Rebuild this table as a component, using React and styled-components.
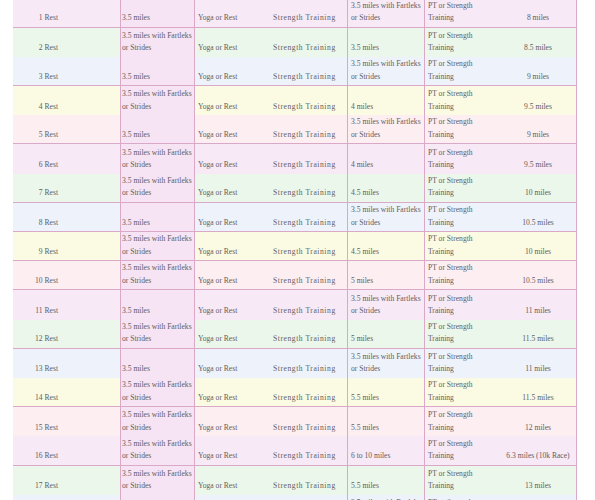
import React from "react";
import styled, { createGlobalStyle } from "styled-components";

const GlobalStyle = createGlobalStyle`
  html, body {
    margin: 0;
    padding: 0;
    background: #ffffff;
    overflow: hidden;
  }
`;

const Page = styled.div`
  width: 595px;
  height: 500px;
  overflow: hidden;
  padding-left: 13px;
  box-sizing: border-box;
  font-family: "Liberation Serif", "Times New Roman", serif;
  color: #615e61;
`;

const Table = styled.div`
  margin-top: -1.5px;
  width: 564px;
`;

const rowColors = ["#f8e9f6", "#ecf7eb", "#eef3fb", "#fbfbe3", "#fdeef2"];

const Row = styled.div`
  display: grid;
  grid-template-columns: 107px 75px 77px 75px 77px 76px 77px;
  height: 29.2px;
  box-sizing: border-box;
  background: ${(p) => p.$bg};
  border-bottom: ${(p) => (p.$line ? "1px solid #d9a9c7" : "none")};
`;

const Cell = styled.div`
  display: flex;
  flex-direction: column;
  justify-content: flex-end;
  align-items: flex-start;
  box-sizing: border-box;
  padding: 0 0 2px ${(p) => p.$pl || 0}px;
  font-size: 7.6px;
  line-height: 12.5px;
  white-space: nowrap;
  letter-spacing: ${(p) => p.$ls || 0}px;
`;

const WeekCell = styled(Cell)`
  align-items: flex-end;
  padding-right: 62px;
`;

const EasyCell = styled(Cell)`
  background: #f6e3f3;
  border-left: 1px solid #d9a9c7;
  border-right: 1px solid #d9a9c7;
  padding-left: 1px;
`;

const RunCell = styled(Cell)`
  border-left: 1px solid #d9a9c7;
  padding-left: 3px;
`;

const CrossCell = styled(Cell)`
  border-left: 1px solid #d9a9c7;
  padding-left: 3px;
`;

const LongCell = styled(Cell)`
  align-items: center;
  border-right: 1px solid #d9a9c7;
`;

const FART = ["3.5 miles with Fartleks", "or Strides"];

const weeks = [
  { easy: "3.5 miles", run: FART, long: "8 miles", line: true },
  { easy: FART, run: "3.5 miles", long: "8.5 miles" },
  { easy: "3.5 miles", run: FART, long: "9 miles", line: true },
  { easy: FART, run: "4 miles", long: "9.5 miles" },
  { easy: "3.5 miles", run: FART, long: "9 miles", line: true },
  { easy: FART, run: "4 miles", long: "9.5 miles" },
  { easy: FART, run: "4.5 miles", long: "10 miles", line: true },
  { easy: "3.5 miles", run: FART, long: "10.5 miles", line: true },
  { easy: FART, run: "4.5 miles", long: "10 miles", line: true },
  { easy: FART, run: "5 miles", long: "10.5 miles", line: true },
  { easy: "3.5 miles", run: FART, long: "11 miles" },
  { easy: FART, run: "5 miles", long: "11.5 miles", line: true },
  { easy: "3.5 miles", run: FART, long: "11 miles" },
  { easy: FART, run: "5.5 miles", long: "11.5 miles", line: true },
  { easy: FART, run: "5.5 miles", long: "12 miles" },
  { easy: FART, run: "6 to 10 miles", long: "6.3 miles (10k Race)", line: true },
  { easy: FART, run: "5.5 miles", long: "13 miles" },
  { easy: "3.5 miles", run: FART, long: "" },
];

function Lines({ value }) {
  const list = Array.isArray(value) ? value : [value];
  return list.map((t, i) => <span key={i}>{t}</span>);
}

export default function App() {
  return (
    <Page>
      <GlobalStyle />
      <Table>
        {weeks.map((w, i) => (
          <Row key={i} $bg={rowColors[i % 5]} $line={w.line}>
            <WeekCell>{i + 1} Rest</WeekCell>
            <EasyCell>
              <Lines value={w.easy} />
            </EasyCell>
            <Cell $pl={3}>Yoga or Rest</Cell>
            <Cell $pl={1} $ls={0.55}>Strength Training</Cell>
            <RunCell>
              <Lines value={w.run} />
            </RunCell>
            <CrossCell>
              <span>PT or Strength</span>
              <span>Training</span>
            </CrossCell>
            <LongCell>{w.long}</LongCell>
          </Row>
        ))}
      </Table>
    </Page>
  );
}
